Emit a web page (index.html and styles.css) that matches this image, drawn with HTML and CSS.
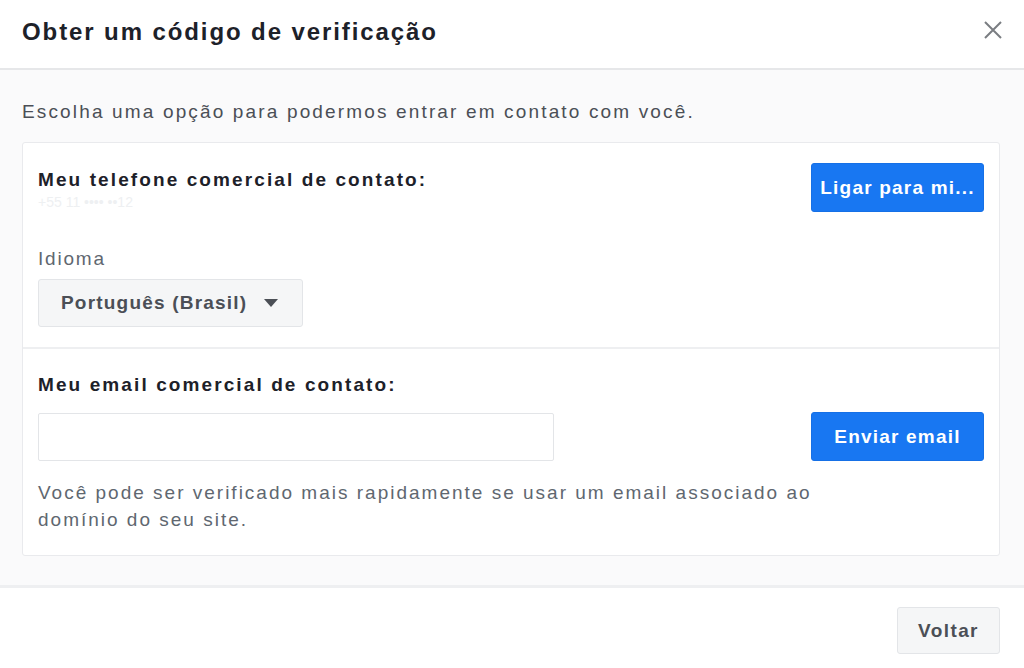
FILE: index.html
```html
<!DOCTYPE html>
<html>
    <head>
        <meta charset="utf-8">
        <title>Obter um código de verificação</title>
        <link rel="stylesheet" href="styles.css">
    </head>
    <body>
        <div class="dialog">
            <header class="dialog-header">
                <h1>Obter um código de verificação</h1>
                <span class="close">
                    <svg width="20" height="20" viewBox="0 0 20 20">
                        <path d="M2 2 L18 18 M18 2 L2 18" stroke="#7a7d82" stroke-width="2" fill="none"/>
                    </svg>
                </span>
            </header>

            <main class="dialog-body">
                <p class="intro">Escolha uma opção para podermos entrar em contato com você.</p>

                <div class="card">
                    <section class="option">
                        <div class="option-row">
                            <div class="option-main">
                                <div class="label">Meu telefone comercial de contato:</div>
                                <div class="phone">+55 11 •••• ••12</div>
                            </div>
                            <button class="btn-primary">Ligar para mi...</button>
                        </div>
                        <div class="field-label">Idioma</div>
                        <div class="select">
                            Português (Brasil)
                            <svg width="14" height="10" viewBox="0 0 14 10">
                                <path d="M0 1 L14 1 L7 9 Z" fill="#4b4f56"/>
                            </svg>
                        </div>
                    </section>

                    <section class="option option-email">
                        <div class="label">Meu email comercial de contato:</div>
                        <div class="option-row email-row">
                            <input class="email-input" type="text">
                            <button class="btn-primary">Enviar email</button>
                        </div>
                        <p class="help">Você pode ser verificado mais rapidamente se usar um email associado ao domínio do seu site.</p>
                    </section>
                </div>
            </main>

            <footer class="dialog-footer">
                <button class="btn-secondary">Voltar</button>
            </footer>
        </div>
    </body>
</html>
```

FILE: styles.css
```css
body {
    margin: 0;
    font-family: 'Liberation Sans', Arial, sans-serif;
    background-color: #fff;
    color: #1d2129;
}

.dialog {
    width: 1024px;
    height: 668px;
    display: flex;
    flex-direction: column;
    overflow: hidden;
}

.dialog-header {
    height: 68px;
    display: flex;
    align-items: center;
    justify-content: space-between;
    padding: 0 21px 0 22px;
    border-bottom: 2px solid #e6e7e9;
    background-color: #fff;
}

.dialog-header h1 {
    margin: -4px 0 0 0;
    font-size: 24px;
    font-weight: bold;
    letter-spacing: 1.9px;
    color: #1d2129;
}

.close {
    display: flex;
    margin-top: -8px;
}

.dialog-body {
    background-color: #fafafb;
    padding: 31px 24px 28px 22px;
    height: 456px;
}

.intro {
    margin: 0 0 19px 0;
    font-size: 19px;
    line-height: 22px;
    letter-spacing: 2.15px;
    color: #4b4f56;
}

.card {
    background-color: #fff;
    border: 1px solid #e9eaed;
    border-radius: 3px;
}

.option {
    padding: 20px 15px 20px 15px;
}

.option + .option {
    border-top: 2px solid #eeeff1;
}

.option-email {
    padding-bottom: 22px;
}

.option-row {
    display: flex;
    justify-content: space-between;
    align-items: flex-start;
}

.label {
    font-size: 19px;
    line-height: 22px;
    font-weight: bold;
    letter-spacing: 2.1px;
    color: #1d2129;
    margin-top: 6px;
}

.option-email .label {
    margin-top: 5px;
}

.phone {
    font-size: 14px;
    color: #eef0f2;
    margin-top: 3px;
}

.btn-primary {
    width: 173px;
    height: 49px;
    background-color: #1877f2;
    color: #fff;
    border: 1px solid #1670e6;
    border-radius: 3px;
    font-family: inherit;
    font-size: 19px;
    font-weight: bold;
    letter-spacing: 1.2px;
    cursor: pointer;
}

.field-label {
    font-size: 19px;
    line-height: 22px;
    letter-spacing: 1.8px;
    color: #606770;
    margin-top: 36px;
}

.select {
    display: inline-flex;
    align-items: center;
    gap: 17px;
    margin-top: 9px;
    height: 46px;
    padding: 0 24px 0 22px;
    background-color: #f5f6f7;
    border: 1px solid #e3e5e8;
    border-radius: 3px;
    font-size: 19px;
    font-weight: bold;
    letter-spacing: 1.2px;
    color: #4b4f56;
}

.email-row {
    margin-top: 16px;
    align-items: center;
}

.email-input {
    width: 516px;
    height: 48px;
    box-sizing: border-box;
    border: 1px solid #e3e5e8;
    border-radius: 2px;
    background-color: #fff;
}

.help {
    margin: 18px 0 0 0;
    width: 800px;
    font-size: 19px;
    line-height: 27px;
    letter-spacing: 2px;
    color: #606770;
}

.dialog-footer {
    flex: 1;
    display: flex;
    justify-content: flex-end;
    align-items: flex-start;
    padding: 19px 24px 0 0;
    border-top: 3px solid #eeeff1;
    background-color: #fff;
}

.btn-secondary {
    width: 103px;
    height: 47px;
    background-color: #f5f6f7;
    border: 1px solid #e3e5e8;
    border-radius: 3px;
    font-family: inherit;
    font-size: 19px;
    font-weight: bold;
    letter-spacing: 1.4px;
    color: #4b4f56;
    cursor: pointer;
}
```
